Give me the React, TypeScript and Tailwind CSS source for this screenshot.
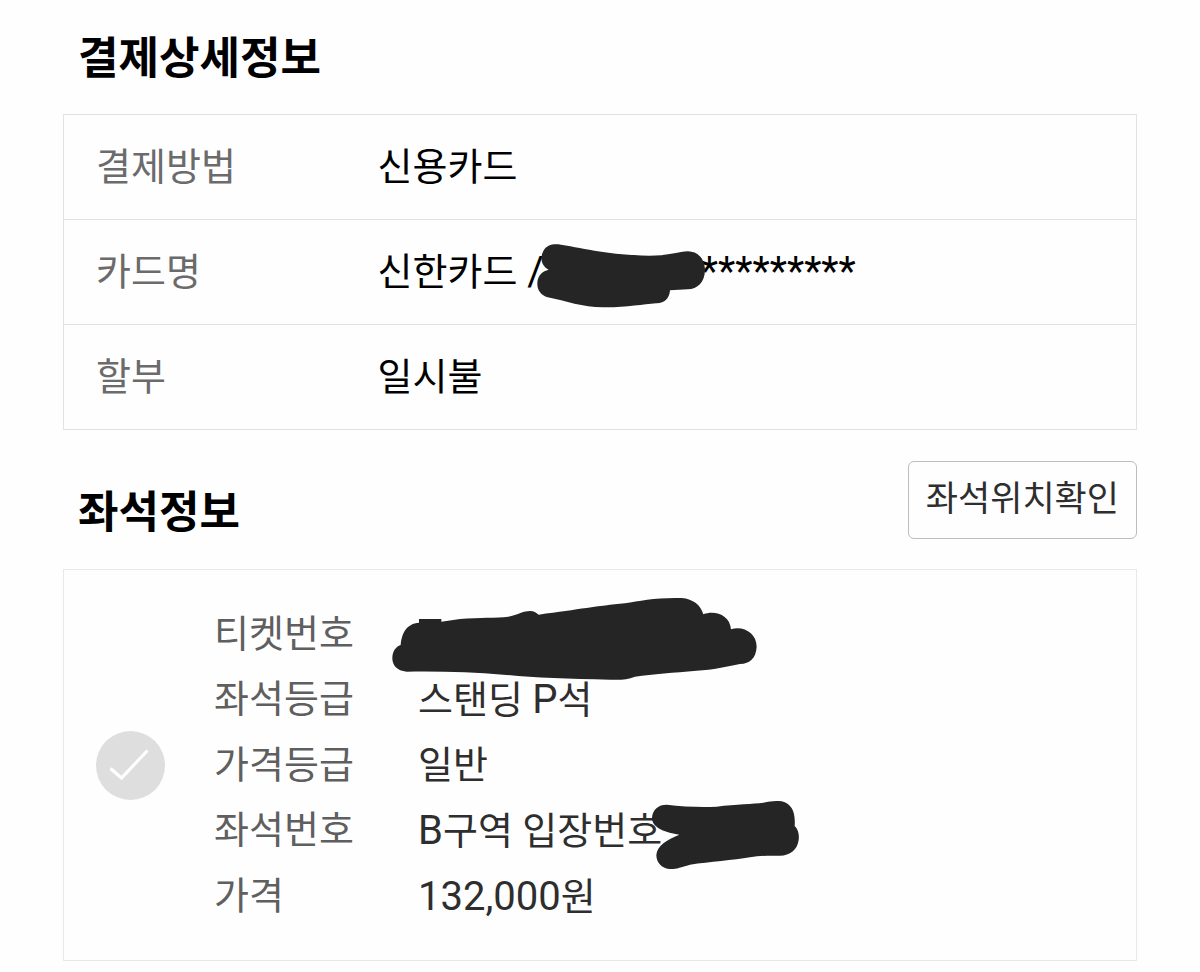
import type { ReactNode } from 'react';

const payment: { label: string; value: ReactNode }[] = [
  { label: '결제방법', value: '신용카드' },
  {
    label: '카드명',
    value: (
      <span className="relative inline-flex whitespace-pre">
        <span>신한카드</span>
        <span className="text-[40px]"> /</span>
        <svg
          className="absolute top-[23px] left-[158px] h-[65px] w-[170px] max-w-none"
          viewBox="110 38 510 195"
          aria-hidden="true"
        >
          <path
            fill="#252525"
            d="M148 118C128 108 120 85 132 62C142 44 160 40 185 43C260 55 330 74 450 76C510 76 540 64 566 63C600 64 617 90 617 120C616 155 595 177 565 177L512 180C510 205 495 220 470 219C430 222 380 232 310 231C250 231 200 212 145 201C125 195 113 180 114 158C115 135 130 122 148 118Z"
          />
        </svg>
        <span className="ml-[157px] text-[40px]">*********</span>
      </span>
    ),
  },
  { label: '할부', value: '일시불' },
];

const seat: { label: string; value: ReactNode }[] = [
  {
    label: '티켓번호',
    value: (
      <svg
        className="absolute -top-[5px] -left-[26px] h-[83px] w-[365px] max-w-none"
        viewBox="36 21 1095 249"
        aria-hidden="true"
      >
        <path
          fill="#252525"
          d="M62 165C65 130 80 100 117 98V87H184V95L240 87C300 82 350 84 385 80C420 72 430 63 450 63C462 63 468 68 476 74C600 58 650 48 735 40C780 32 830 22 905 24C940 27 962 45 970 73C1005 60 1050 75 1053 118C1090 106 1130 130 1130 170C1128 205 1110 220 1080 222C1040 230 1000 240 950 242C880 248 820 252 765 260C740 270 720 270 690 269C560 268 450 262 370 254C280 247 180 243 80 245C50 243 37 225 37 205C37 185 47 170 62 165Z"
        />
      </svg>
    ),
  },
  {
    label: '좌석등급',
    value: (
      <>
        스탠딩 <span className="text-[40px]">P</span>석
      </>
    ),
  },
  { label: '가격등급', value: '일반' },
  {
    label: '좌석번호',
    value: (
      <>
        <span className="text-[40px]">B</span>구역 입장번호
        <svg
          className="absolute top-[2px] left-[233px] h-[70px] w-[149px] max-w-none"
          viewBox="753 30 447 210"
          aria-hidden="true"
        >
          <path
            fill="#252525"
            d="M838 134C800 128 755 115 756 83C758 58 775 44 800 44C850 50 900 52 950 50C1010 42 1060 42 1090 38C1110 34 1125 31 1145 34C1175 42 1187 65 1184 108C1195 118 1198 135 1196 150C1192 180 1170 197 1140 197C1110 197 1080 196 1050 202C1000 210 930 216 870 224C840 232 830 238 808 237C785 234 769 218 769 195C772 165 800 150 838 134Z"
          />
        </svg>
      </>
    ),
  },
  {
    label: '가격',
    value: (
      <>
        <span className="text-[40px]">132,000</span>원
      </>
    ),
  },
];

export default function App() {
  return (
    <main className="min-h-screen bg-[#fefefe] px-[63px] pt-[23px] pb-2 font-[Roboto,'Noto_Sans_CJK_KR',sans-serif] text-[38px] text-black">
      <section>
        <h2 className="px-[15px] text-[44px] leading-[72px] font-bold">결제상세정보</h2>
        <table className="mt-[19px] w-full border-collapse border border-[#e2e2e2]">
          <tbody>
            {payment.map((row) => (
              <tr key={row.label} className="border-b border-[#e2e2e2]">
                <th scope="row" className="w-[314px] p-0 pl-8 text-left leading-[104px] font-normal text-[#6b6b6b]">
                  {row.label}
                </th>
                <td className="p-0 leading-[104px]">{row.value}</td>
              </tr>
            ))}
          </tbody>
        </table>
      </section>

      <section>
        <div className="mt-[31px] flex items-start justify-between">
          <h2 className="px-[15px] pt-4 text-[44px] leading-[72px] font-bold">좌석정보</h2>
          <button
            type="button"
            className="h-[78px] rounded-md border border-[#bdbdbd] px-[17px] text-[35px] text-[#2e2e2e]"
          >
            좌석위치확인
          </button>
        </div>
        <div className="mt-5 flex items-center border border-[#e8e8e8] py-[30px] pl-8">
          <label className="relative flex shrink-0">
            <input
              type="checkbox"
              aria-label="좌석 선택"
              className="size-[69px] appearance-none rounded-full bg-[#dedede]"
            />
            <svg className="pointer-events-none absolute inset-0 size-full" viewBox="0 0 69 69" fill="none" aria-hidden="true">
              <path d="M14.5 37.5L25.5 47L51.5 19.5" stroke="#fff" strokeWidth="3.2" />
            </svg>
          </label>
          <dl className="ml-[49px] pt-[2px] leading-[65px]">
            {seat.map((row) => (
              <div key={row.label} className="flex">
                <dt className="w-[204px] text-[#5f5f5f]">{row.label}</dt>
                <dd className="relative whitespace-nowrap text-[#2e2e2e]">{row.value}</dd>
              </div>
            ))}
          </dl>
        </div>
      </section>
    </main>
  );
}
